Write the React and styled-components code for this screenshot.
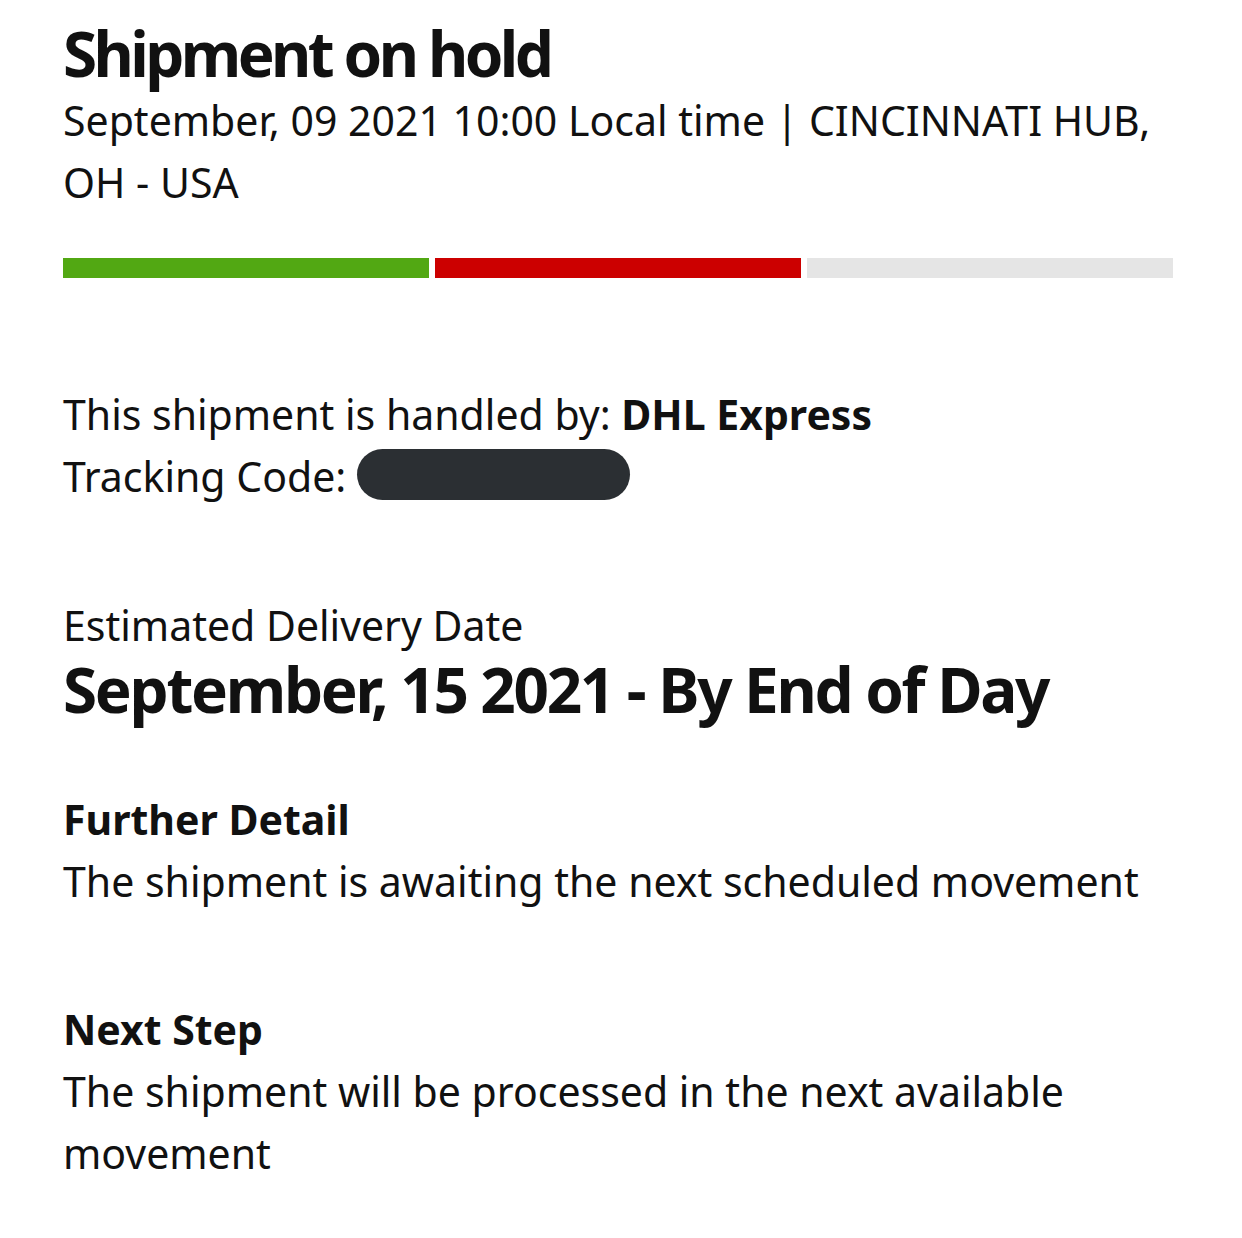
import React from 'react';
import styled, { createGlobalStyle } from 'styled-components';

const GlobalStyle = createGlobalStyle`
    html, body {
        margin: 0;
        padding: 0;
        background: #ffffff;
    }
    body {
        font-family: "Noto Sans", "Liberation Sans", sans-serif;
        color: #111111;
    }
`;

const Page = styled.div`
    width: 1130px;
    padding: 17px 0 40px 63px;
    display: flex;
    flex-direction: column;
`;

const Title = styled.h1`
    margin: 0;
    font-size: 62px;
    line-height: 72px;
    font-weight: 700;
    letter-spacing: -3.6px;
`;

const Text = styled.p`
    margin: ${(p) => p.$top || 0}px 0 0;
    font-size: 41px;
    line-height: 62px;
    font-weight: 400;
`;

const Strong = styled.strong`
    font-weight: 700;
`;

const Progress = styled.div`
    margin-top: 45px;
    width: 1110px;
    display: grid;
    grid-template-columns: repeat(3, 1fr);
    gap: 6px;
`;

const Step = styled.div`
    height: 20px;
    background: ${(p) => p.$color};
`;

// redacted tracking number
const Redacted = styled.span`
    display: inline-block;
    vertical-align: -8px;
    width: 273px;
    height: 51px;
    margin-left: 11px;
    border-radius: 26px;
    background: #2b2f33;
`;

const BigDate = styled.div`
    font-size: 62px;
    line-height: 66px;
    font-weight: 700;
    letter-spacing: -2.3px;
`;

const Heading = styled.h2`
    margin: ${(p) => p.$top}px 0 0;
    font-size: 41px;
    line-height: 62px;
    font-weight: 700;
`;

export default function App() {
    return (
        <>
            <GlobalStyle />
            <Page>
                <Title>Shipment on hold</Title>
                <Text>September, 09 2021 10:00 Local time | CINCINNATI HUB, OH - USA</Text>
                <Progress>
                    <Step $color="#52a813" />
                    <Step $color="#cc0000" />
                    <Step $color="#e5e5e5" />
                </Progress>
                <Text $top={105}>
                    This shipment is handled by: <Strong>DHL Express</Strong>
                    <br />
                    Tracking Code:<Redacted />
                </Text>
                <Text $top={87}>Estimated Delivery Date</Text>
                <BigDate>September, 15 2021 - By End of Day</BigDate>
                <Heading $top={66}>Further Detail</Heading>
                <Text>The shipment is awaiting the next scheduled movement</Text>
                <Heading $top={86}>Next Step</Heading>
                <Text>The shipment will be processed in the next available movement</Text>
            </Page>
        </>
    );
}
